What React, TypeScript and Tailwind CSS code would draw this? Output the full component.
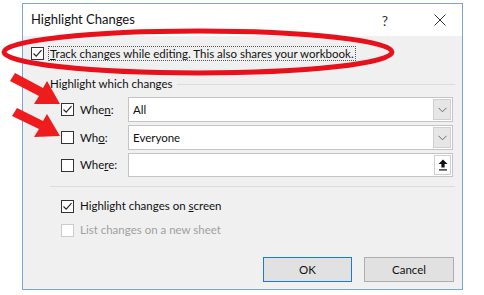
import React from "react";

const font = { fontFamily: 'Lato, "Noto Sans", sans-serif' };

function Check({ checked, disabled }: { checked?: boolean; disabled?: boolean }) {
  return (
    <div
      className={
        "flex h-[13px] w-[13px] shrink-0 items-center justify-center border bg-white " +
        (disabled ? "border-[#cccccc]" : "border-[#333333]")
      }
    >
      {checked && (
        <svg width="11" height="11" viewBox="0 0 11 11">
          <path d="M1.5 5.5 L4.2 8.2 L9.5 2.2" fill="none" stroke="#222" strokeWidth="1.1" />
        </svg>
      )}
    </div>
  );
}

function Chevron() {
  return (
    <svg width="9" height="6" viewBox="0 0 9 6">
      <path d="M0.5 0.8 L4.5 4.8 L8.5 0.8" fill="none" stroke="#6b6b6b" strokeWidth="1" />
    </svg>
  );
}

function Combo({ value }: { value: string }) {
  return (
    <div className="flex h-[25px] w-[325px] items-stretch border border-[#c4c4c4] bg-white">
      <div className="flex flex-1 items-center pl-[4px] text-[11.5px] text-[#111]">{value}</div>
      <div className="m-[1px] flex w-[18px] items-center justify-center border border-[#cfcfcf] bg-[#e6e6e6]">
        <Chevron />
      </div>
    </div>
  );
}

export default function App() {
  return (
    <div className="relative h-[295px] w-[484px] overflow-hidden bg-white text-[#111]" style={font}>
      <div className="ml-[22px] mt-[3px] flex h-[287px] w-[441px] flex-col border border-[#7ba6d4] bg-[#f0f0f0]">
        {/* title bar */}
        <div className="flex h-[32px] shrink-0 items-center bg-white pl-[8px]">
          <span className="text-[13px]">Highlight Changes</span>
          <span className="ml-auto mr-[46px] text-[14px] text-[#333]">?</span>
          <svg className="mr-[16px]" width="12" height="12" viewBox="0 0 12 12">
            <path d="M0.5 0.5 L11.5 11.5 M11.5 0.5 L0.5 11.5" stroke="#333" strokeWidth="1" />
          </svg>
        </div>

        {/* body */}
        <div className="flex flex-1 flex-col pl-[8px] pr-[7px]">
          <div className="mt-[10px] flex items-center gap-[4px]">
            <Check checked />
            <span className="border border-dotted border-[#555] px-[1px] text-[11.5px] leading-[13px]">
              <span className="underline">T</span>rack changes while editing. This also shares your workbook.
            </span>
          </div>

          {/* group */}
          <div className="ml-[19px] mt-[16px] flex items-center">
            <span className="text-[11.5px] leading-[14px]">Highlight which changes</span>
            <div className="ml-[4px] h-px flex-1 bg-[#dcdcdc]" />
          </div>

          <div className="ml-[30px] mt-[6px] flex flex-col gap-[3px]">
            <div className="flex items-center">
              <Check checked />
              <span className="ml-[6px] w-[48px] text-[11.5px]">
                Whe<span className="underline">n</span>:
              </span>
              <Combo value="All" />
            </div>
            <div className="flex items-center">
              <Check />
              <span className="ml-[6px] w-[48px] text-[11.5px]">
                Wh<span className="underline">o</span>:
              </span>
              <Combo value="Everyone" />
            </div>
            <div className="flex items-center">
              <Check />
              <span className="ml-[6px] w-[48px] text-[11.5px]">
                Whe<span className="underline">r</span>e:
              </span>
              <div className="flex h-[24px] w-[325px] items-stretch border border-[#c4c4c4] bg-white">
                <div className="flex-1" />
                <div className="m-[1px] flex w-[17px] items-center justify-center border border-[#cfcfcf] bg-white">
                  <svg width="10" height="12" viewBox="0 0 10 12">
                    <path d="M5 0.5 L9.5 5 L6.6 5 L6.6 8.5 L3.4 8.5 L3.4 5 L0.5 5 Z" fill="#111" />
                    <rect x="1" y="10.3" width="8" height="1.2" fill="#111" />
                  </svg>
                </div>
              </div>
            </div>
          </div>

          <div className="ml-[19px] mt-[9px] h-px w-[405px] bg-[#dcdcdc]" />

          <div className="ml-[30px] mt-[12px] flex flex-col gap-[10px]">
            <div className="flex items-center gap-[6px]">
              <Check checked />
              <span className="text-[11.5px] leading-[14px]">
                Highlight changes on <span className="underline">s</span>creen
              </span>
            </div>
            <div className="flex items-center gap-[6px]">
              <Check disabled />
              <span className="text-[11.5px] leading-[14px] text-[#a0a0a0]">List changes on a new sheet</span>
            </div>
          </div>

          <div className="mt-auto mb-[7px] flex justify-end gap-[12px] pr-[1px]">
            <div className="flex h-[25px] w-[89px] items-center justify-center border border-[#1f7ad4] bg-[#e1e1e1] text-[11.5px]">
              OK
            </div>
            <div className="flex h-[25px] w-[90px] items-center justify-center border border-[#adadad] bg-[#e1e1e1] text-[11.5px]">
              Cancel
            </div>
          </div>
        </div>
      </div>

      {/* red annotations */}
      <svg className="pointer-events-none absolute left-0 top-0" width="484" height="295" viewBox="0 0 484 295">
        <ellipse cx="198" cy="52" rx="194" ry="21" fill="none" stroke="#e8101a" strokeWidth="5" />
        <g fill="#ee1c1c">
          <path d="M10 81 L15 73 L43 88 L47 81 L60 104 L34 104 L39 96 Z" />
          <path d="M12 116 L17 108 L43 121 L47 114 L60 136 L34 137 L39 129 Z" />
        </g>
      </svg>
    </div>
  );
}
